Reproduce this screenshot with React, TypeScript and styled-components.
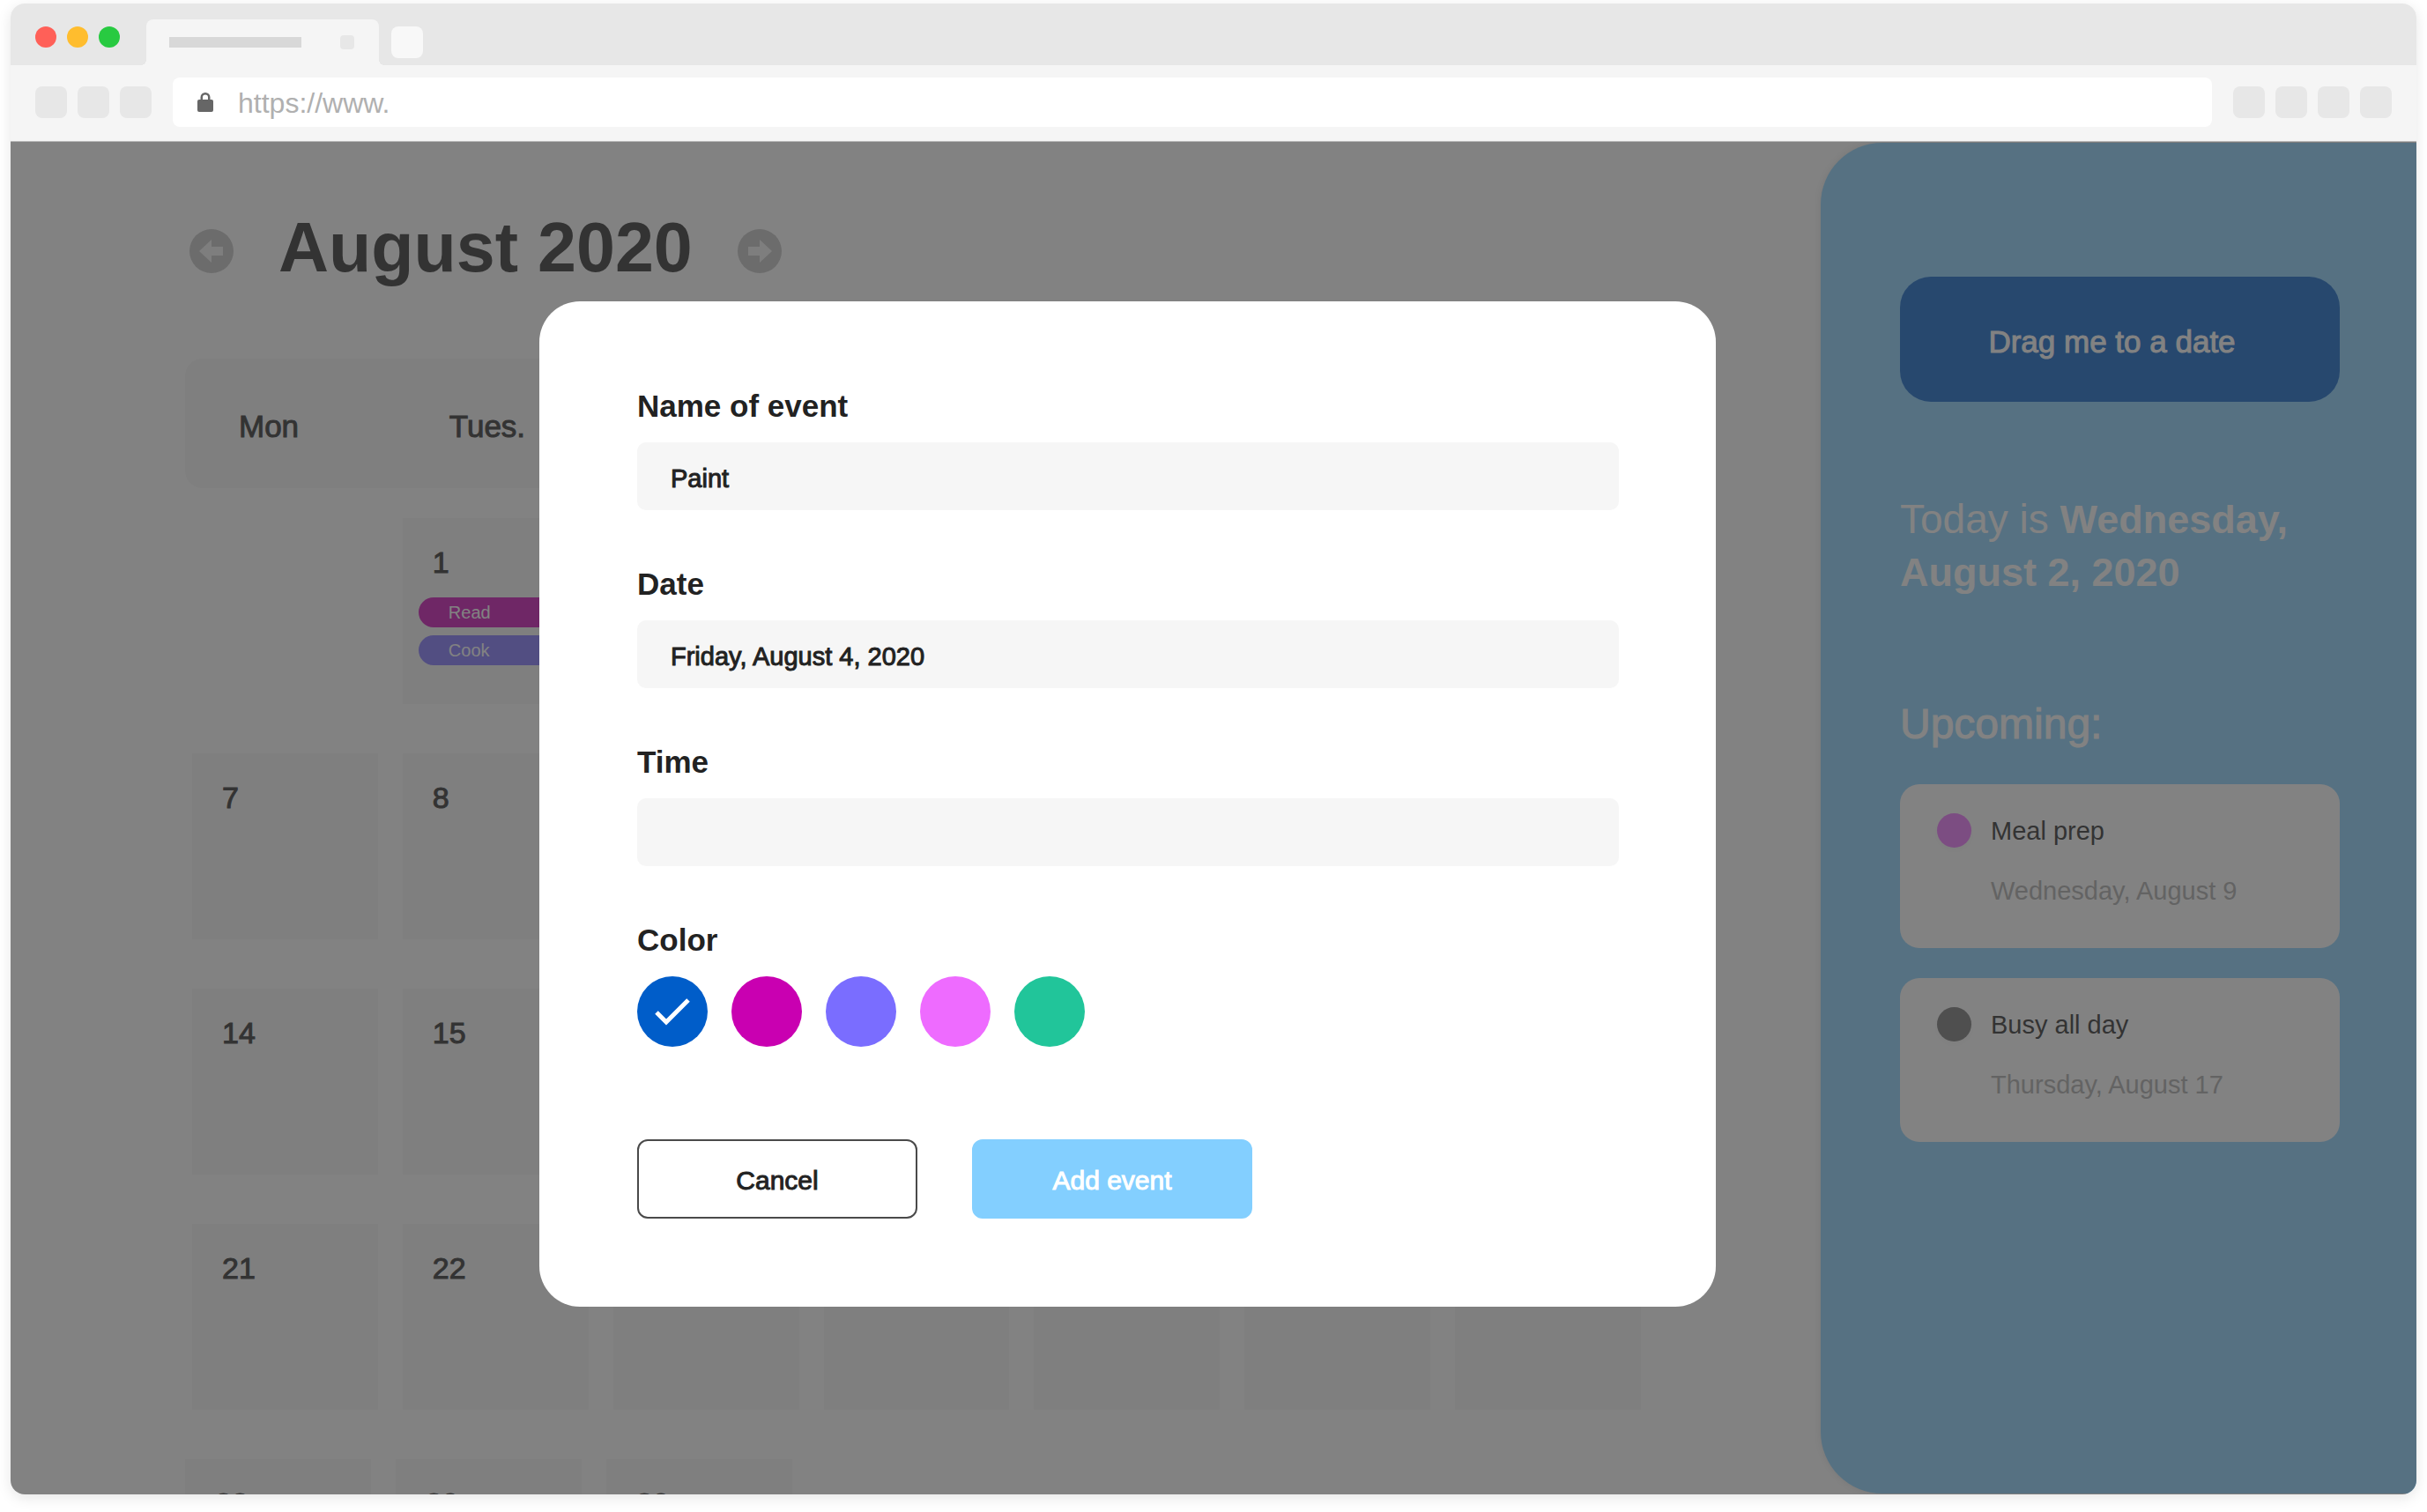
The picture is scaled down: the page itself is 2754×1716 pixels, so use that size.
import React from "react";
import styled, { createGlobalStyle, css } from "styled-components";

const ink = "#222222";
const field = "#f6f6f6";
const sky = "#83cfff";

const Global = createGlobalStyle`
  * { box-sizing: border-box; }
  html, body, #root { height: 100%; }
  body { margin: 0; background: #fff; }
  body, button, input { font-family: "Liberation Sans", Arial, Helvetica, sans-serif; }
  h1, h2, p, ul, fieldset { margin: 0; padding: 0; border: 0; }
  button { cursor: pointer; }
`;

/* Liberation Sans has no 500 weight; a hairline stroke in the text colour stands in for it. */
const medium = css`-webkit-text-stroke: 1px currentColor;`;

const Page = styled.div`
  height: 100%;
  min-height: 600px;
  padding: 4px 12px 20px;
  display: flex;
`;
const Browser = styled.div`
  flex: 1;
  min-width: 0;
  display: flex;
  flex-direction: column;
  border-radius: 16px;
  overflow: hidden;
  box-shadow: 0 4px 16px rgba(0, 0, 0, 0.1);
`;
const TabBar = styled.div`
  height: 70px;
  padding-left: 28px;
  background: #e7e7e7;
  display: flex;
  align-items: flex-end;
`;
const Lights = styled.div`
  display: flex;
  gap: 12px;
  padding-bottom: 20px;
  margin-right: 30px;
`;
const Light = styled.button<{ $c: string }>`
  width: 24px;
  height: 24px;
  padding: 0;
  border: 0;
  border-radius: 50%;
  background: ${(p) => p.$c};
`;
const Tab = styled.div`
  position: relative;
  width: 264px;
  height: 52px;
  padding: 0 28px 0 26px;
  margin-right: 14px;
  border-radius: 8px 8px 0 0;
  background: #f5f5f5;
  display: flex;
  align-items: center;
  justify-content: space-between;
  &::before, &::after {
    content: "";
    position: absolute;
    bottom: 0;
    width: 6px;
    height: 6px;
  }
  &::before { right: 100%; background: radial-gradient(circle at 0 0, transparent 6px, #f5f5f5 6px); }
  &::after { left: 100%; background: radial-gradient(circle at 100% 0, transparent 6px, #f5f5f5 6px); }
`;
const TabTitle = styled.span`
  width: 150px;
  height: 12px;
  background: #d8d8d8;
`;
const TabClose = styled.button`
  width: 16px;
  height: 16px;
  padding: 0;
  border: 0;
  border-radius: 4px;
  background: #e7e7e7;
`;
const Square = styled.button<{ $c?: string }>`
  width: 36px;
  height: 36px;
  padding: 0;
  border: 0;
  border-radius: 8px;
  background: ${(p) => p.$c ?? "#e7e7e7"};
`;
const NewTab = styled.div`
  display: flex;
  padding-bottom: 8px;
`;
const Toolbar = styled.div`
  height: 87px;
  padding: 14px 28px 16px;
  background: #f5f5f5;
  border-bottom: 1px solid #b8b8b8;
  display: flex;
  align-items: center;
  gap: 24px;
`;
const Squares = styled.div`
  display: flex;
  gap: 12px;
`;
const Address = styled.label`
  flex: 1;
  height: 56px;
  padding: 0 28px;
  border-radius: 8px;
  background: #fff;
  display: flex;
  align-items: center;
  gap: 28px;
`;
const UrlInput = styled.input`
  flex: 1;
  height: 56px;
  padding: 2px 0 0;
  border: 0;
  outline: 0;
  background: transparent;
  font-size: 32px;
  color: #b0b0b0;
`;
const Viewport = styled.div`
  position: relative;
  flex: 1;
  min-height: 0;
  overflow: hidden;
  background: #fff;
  display: flex;
`;
const Calendar = styled.main`
  flex: 1;
  min-width: 0;
  padding: 74px 204px 0 198px;
  color: ${ink};
`;
const MonthBar = styled.header`
  display: flex;
  align-items: center;
  gap: 51px;
  height: 92px;
  padding-left: 5px;
`;
const Month = styled.h1`
  font-size: 79px;
  line-height: 92px;
  font-weight: 700;
`;
const RoundButton = styled.button`
  width: 50px;
  height: 50px;
  margin-top: 8px;
  padding: 0;
  border: 0;
  background: transparent;
  svg { display: block; }
`;
const WeekHeader = styled.div`
  margin: 80px 0 34px;
  height: 147px;
  padding: 7px 0 0 8px;
  border-radius: 20px;
  background: ${field};
  display: grid;
  grid-template-columns: repeat(7, 1fr);
  column-gap: 28px;
  align-items: center;
`;
const WeekDay = styled.div`
  padding-left: 53px;
  font-size: 35px;
  line-height: 40px;
  ${medium}
`;
const Weeks = styled.div`
  display: grid;
  row-gap: 56px;
`;
const Week = styled.div<{ $last?: boolean }>`
  display: grid;
  grid-template-columns: repeat(7, 1fr);
  column-gap: 28px;
  padding: ${(p) => (p.$last ? "0 8px 0 0" : "0 0 0 8px")};
`;
const Day = styled.div<{ $blank?: boolean }>`
  height: 211px;
  padding-top: 30px;
  background: ${(p) => (p.$blank ? "transparent" : field)};
`;
const DayNumber = styled.div`
  padding-left: 34px;
  font-size: 34px;
  line-height: 40px;
  ${medium}
`;
const Events = styled.ul`
  list-style: none;
  margin-top: 20px;
  padding: 0 18px;
  display: grid;
  gap: 9px;
`;
const EventPill = styled.li<{ $c: string }>`
  height: 34px;
  padding-left: 34px;
  border-radius: 17px;
  background: ${(p) => p.$c};
  color: #fff;
  font-size: 20px;
  line-height: 34px;
`;
const Sidebar = styled.aside`
  width: 676px;
  margin-top: 1px;
  margin-bottom: 1px;
  padding: 152px 87px 0 90px;
  border-radius: 70px 0 0 70px;
  background: ${sky};
  box-shadow: 0 0 10px rgba(0, 0, 0, 0.12);
  color: #fff;
`;
const DragButton = styled.button`
  display: block;
  width: 100%;
  height: 142px;
  padding: 6px 18px 0 0;
  border: 0;
  border-radius: 35px;
  background: #005cc8;
  color: #fff;
  font-size: 35px;
  line-height: 40px;
  ${medium}
`;
const Today = styled.p`
  margin-top: 103px;
  font-size: 46px;
  line-height: 60px;
  b { font-size: 45px; line-height: 1; }
`;
const Upcoming = styled.h2`
  margin: 113px 0 38px;
  font-size: 48px;
  line-height: 60px;
  font-weight: 400;
  ${medium}
`;
const Cards = styled.ul`
  list-style: none;
  display: grid;
  gap: 34px;
`;
const Card = styled.li`
  height: 186px;
  padding: 33px 42px;
  border-radius: 22px;
  background: #fff;
  display: flex;
  gap: 22px;
  font-size: 29px;
  line-height: 40px;
  color: ${ink};
`;
const Dot = styled.span<{ $c: string }>`
  width: 39px;
  height: 39px;
  border-radius: 50%;
  background: ${(p) => p.$c};
  box-shadow: 0 3px 6px rgba(0, 0, 0, 0.04);
`;
const CardText = styled.div`
  display: grid;
  align-content: start;
  gap: 28px;
`;
const CardDate = styled.div`
  color: #a8a8a8;
`;
const Backdrop = styled.div`
  position: absolute;
  inset: 0;
  background: rgba(60, 60, 60, 0.645);
`;
const Modal = styled.form`
  position: absolute;
  top: 181px;
  left: 600px;
  width: 1335px;
  padding: 99px 110px 100px 111px;
  border-radius: 46px;
  background: #fff;
  color: ${ink};
`;
const Field = styled.div`
  display: grid;
  gap: 21px;
  margin-bottom: 64px;
`;
const labelText = css`
  font-size: 35px;
  line-height: 40px;
  font-weight: 700;
`;
const Label = styled.label`${labelText}`;
const TextInput = styled.input`
  width: 100%;
  height: 77px;
  padding: 5px 38px 0;
  border: 0;
  border-radius: 10px;
  background: ${field};
  color: ${ink};
  font-size: 29px;
  ${medium}
`;
const ColorSet = styled.fieldset`
  min-width: 0;
`;
const Legend = styled.legend`
  ${labelText}
  padding: 0;
  margin-bottom: 21px;
`;
const Swatches = styled.div`
  display: flex;
  gap: 27px;
`;
const Swatch = styled.label<{ $c: string }>`
  width: 80px;
  height: 80px;
  border-radius: 50%;
  background: ${(p) => p.$c};
  display: grid;
  place-items: center;
  cursor: pointer;
  input { appearance: none; margin: 0; width: 80px; height: 80px; grid-area: 1 / 1; border-radius: 50%; }
  svg { grid-area: 1 / 1; visibility: hidden; pointer-events: none; }
  input:checked + svg { visibility: visible; }
`;
const Actions = styled.div`
  margin-top: 105px;
  display: flex;
  gap: 62px;
`;
const Action = styled.button<{ $primary?: boolean }>`
  width: 318px;
  height: 90px;
  padding: 4px 0 0;
  border: 2px solid ${(p) => (p.$primary ? sky : "#4a4a4a")};
  border-radius: 12px;
  background: ${(p) => (p.$primary ? sky : "#fff")};
  color: ${(p) => (p.$primary ? "#fff" : ink)};
  font-size: 30px;
  ${medium}
`;

const Arrow = ({ right }: { right?: boolean }) => (
  <svg width="50" height="50" viewBox="0 0 50 50" aria-hidden="true">
    <circle cx="25" cy="25" r="25" fill="#c1c1c1" />
    <path
      fill="#f4f4f4"
      d={right ? "M12 20h13v-8l14 13-14 13v-8H12z" : "M38 20H25v-8L11 25l14 13v-8h13z"}
    />
  </svg>
);

const Lock = () => (
  <svg width="18" height="22" viewBox="0 0 18 22" aria-hidden="true">
    <rect y="8" width="18" height="14" rx="2" fill="#666" />
    <path d="M4.750 9V5.500a4.250 4.250 0 0 1 8.500 0V9" fill="none" stroke="#666" strokeWidth="2.500" />
  </svg>
);

const weekDays = ["Mon", "Tues.", "Wed.", "Thurs.", "Fri.", "Sat.", "Sun."];
const weeks: (number | null)[][] = [
  [null, 1, 2, 3, 4, 5, 6],
  [7, 8, 9, 10, 11, 12, 13],
  [14, 15, 16, 17, 18, 19, 20],
  [21, 22, 23, 24, 25, 26, 27],
  [28, 29, 30, null, null, null, null],
];
const events: Record<number, { name: string; color: string }[]> = {
  1: [
    { name: "Read", color: "#c900b1" },
    { name: "Cook", color: "#7a6dff" },
  ],
};
const upcoming = [
  { name: "Meal prep", date: "Wednesday, August 9", color: "#ee6bff" },
  { name: "Busy all day", date: "Thursday, August 17", color: "#707070" },
];
const colors = [
  ["Blue", "#005dc9"],
  ["Magenta", "#c900b1"],
  ["Violet", "#7a6dff"],
  ["Pink", "#ee6bff"],
  ["Green", "#21c59a"],
];

export default function App() {
  return (
    <Page>
      <Global />
      <Browser>
        <TabBar>
          <Lights>
            <Light $c="#ff6058" aria-label="Close window" />
            <Light $c="#ffbd2e" aria-label="Minimize window" />
            <Light $c="#28ca41" aria-label="Zoom window" />
          </Lights>
          <Tab>
            <TabTitle />
            <TabClose aria-label="Close tab" />
          </Tab>
          <NewTab>
            <Square $c="#f8f8f8" aria-label="New tab" />
          </NewTab>
        </TabBar>
        <Toolbar>
          <Squares>
            {["Back", "Forward", "Reload"].map((n) => (
              <Square key={n} aria-label={n} />
            ))}
          </Squares>
          <Address>
            <Lock />
            <UrlInput aria-label="Address" defaultValue="https://www." />
          </Address>
          <Squares>
            {["Share", "Bookmarks", "Downloads", "Menu"].map((n) => (
              <Square key={n} aria-label={n} />
            ))}
          </Squares>
        </Toolbar>
        <Viewport>
          <Calendar>
            <MonthBar>
              <RoundButton aria-label="Previous month"><Arrow /></RoundButton>
              <Month>August 2020</Month>
              <RoundButton aria-label="Next month"><Arrow right /></RoundButton>
            </MonthBar>
            <WeekHeader>
              {weekDays.map((d) => <WeekDay key={d}>{d}</WeekDay>)}
            </WeekHeader>
            <Weeks>
              {weeks.map((week, w) => (
                <Week key={w} $last={w === weeks.length - 1}>
                  {week.map((day, i) => (
                    <Day key={i} $blank={day === null}>
                      {day !== null && <DayNumber>{day}</DayNumber>}
                      {day !== null && events[day] && (
                        <Events>
                          {events[day].map((e) => (
                            <EventPill key={e.name} $c={e.color}>{e.name}</EventPill>
                          ))}
                        </Events>
                      )}
                    </Day>
                  ))}
                </Week>
              ))}
            </Weeks>
          </Calendar>
          <Sidebar>
            <DragButton>Drag me to a date</DragButton>
            <Today>Today is <b>Wednesday, August 2, 2020</b></Today>
            <Upcoming>Upcoming:</Upcoming>
            <Cards>
              {upcoming.map((u) => (
                <Card key={u.name}>
                  <Dot $c={u.color} />
                  <CardText>
                    <div>{u.name}</div>
                    <CardDate>{u.date}</CardDate>
                  </CardText>
                </Card>
              ))}
            </Cards>
          </Sidebar>
          <Backdrop />
          <Modal role="dialog" aria-label="Add event" onSubmit={(e) => e.preventDefault()}>
            <Field>
              <Label htmlFor="name">Name of event</Label>
              <TextInput id="name" defaultValue="Paint" />
            </Field>
            <Field>
              <Label htmlFor="date">Date</Label>
              <TextInput id="date" defaultValue="Friday, August 4, 2020" />
            </Field>
            <Field>
              <Label htmlFor="time">Time</Label>
              <TextInput id="time" />
            </Field>
            <ColorSet>
              <Legend>Color</Legend>
              <Swatches>
                {colors.map(([name, c], i) => (
                  <Swatch key={name} $c={c}>
                    <input type="radio" name="color" value={name} aria-label={name} defaultChecked={i === 0} />
                    <svg width="40" height="32" viewBox="0 0 40 32" aria-hidden="true">
                      <path d="M2 17l11 11L38 3" fill="none" stroke="#fff" strokeWidth="5" />
                    </svg>
                  </Swatch>
                ))}
              </Swatches>
            </ColorSet>
            <Actions>
              <Action type="button">Cancel</Action>
              <Action type="submit" $primary>Add event</Action>
            </Actions>
          </Modal>
        </Viewport>
      </Browser>
    </Page>
  );
}
